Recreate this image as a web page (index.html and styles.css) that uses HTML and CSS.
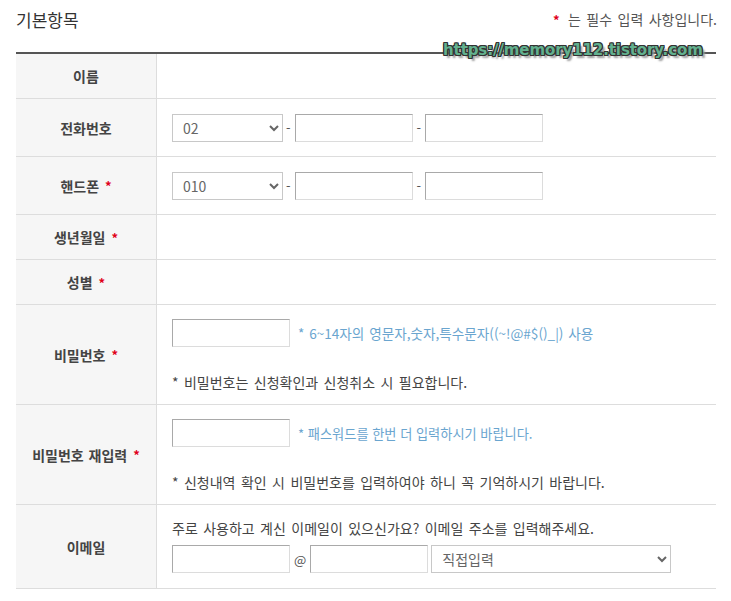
FILE: index.html
```html
<!DOCTYPE html>
<html lang="ko">
<head>
<meta charset="utf-8">
<title>기본항목</title>
<link rel="stylesheet" href="styles.css">
</head>
<body>
<div class="wrap">
  <div class="head">
    <h2 class="title">기본항목</h2>
    <p class="req-note"><span class="star">*</span> 는 필수 입력 사항입니다.</p>
  </div>
  <div class="watermark">https://memory112.tistory.com</div>
  <div class="form">
    <div class="row h44">
      <div class="label">이름</div>
      <div class="cell"></div>
    </div>
    <div class="row h57">
      <div class="label">전화번호</div>
      <div class="cell line">
        <select class="sel-s"><option>02</option></select>
        <span class="dash">-</span>
        <input class="inp" type="text">
        <span class="dash dash2">-</span>
        <input class="inp" type="text">
      </div>
    </div>
    <div class="row h57">
      <div class="label">핸드폰<span class="star lstar">*</span></div>
      <div class="cell line">
        <select class="sel-s"><option>010</option></select>
        <span class="dash">-</span>
        <input class="inp" type="text">
        <span class="dash dash2">-</span>
        <input class="inp" type="text">
      </div>
    </div>
    <div class="row h44">
      <div class="label">생년월일<span class="star lstar">*</span></div>
      <div class="cell"></div>
    </div>
    <div class="row h44">
      <div class="label">성별<span class="star lstar">*</span></div>
      <div class="cell"></div>
    </div>
    <div class="row">
      <div class="label">비밀번호<span class="star lstar">*</span></div>
      <div class="cell stack">
        <div class="line">
          <input class="inp" type="password">
          <span class="hint">* 6~14자의 영문자,숫자,특수문자((~!@#$()_|) 사용</span>
        </div>
        <p class="note">* 비밀번호는 신청확인과 신청취소 시 필요합니다.</p>
      </div>
    </div>
    <div class="row">
      <div class="label">비밀번호 재입력<span class="star lstar">*</span></div>
      <div class="cell stack">
        <div class="line">
          <input class="inp" type="password">
          <span class="hint hint-kr">* 패스워드를 한번 더 입력하시기 바랍니다.</span>
        </div>
        <p class="note">* 신청내역 확인 시 비밀번호를 입력하여야 하니 꼭 기억하시기 바랍니다.</p>
      </div>
    </div>
    <div class="row">
      <div class="label">이메일</div>
      <div class="cell email">
        <p class="email-text">주로 사용하고 계신 이메일이 있으신가요? 이메일 주소를 입력해주세요.</p>
        <div class="line">
          <input class="inp" type="text">
          <span class="at">@</span>
          <input class="inp" type="text">
          <select class="sel-l"><option>직접입력</option></select>
        </div>
      </div>
    </div>
  </div>
</div>
</body>
</html>
```
FILE: styles.css
```css
html, body {
  margin: 0;
  padding: 0;
  background: #fff;
}
body {
  font-family: "Noto Sans CJK KR", "Noto Sans", sans-serif;
  color: #333;
  font-size: 14px;
}
.wrap {
  position: relative;
  width: 700px;
  margin-left: 16px;
}
.head {
  display: flex;
  justify-content: space-between;
  align-items: flex-start;
  height: 52px;
}
.title {
  margin: 9px 0 0;
  font-size: 17px;
  font-weight: 400;
  line-height: 22px;
  color: #333;
}
.req-note {
  margin: 9px -1px 0 0;
  font-size: 14px;
  word-spacing: 1.5px;
  line-height: 20px;
  color: #555;
}
.star {
  color: #e0001b;
  font-weight: 700;
  font-size: 13px;
  margin-right: 3px;
}
.watermark {
  position: absolute;
  left: 427px;
  top: 40px;
  font-family: "DejaVu Sans", sans-serif;
  font-weight: 700;
  font-size: 15px;
  line-height: 20px;
  letter-spacing: -0.1px;
  color: #62b08e;
  text-shadow: 1px 0 0 #333, -1px 0 0 #333, 0 1px 0 #333, 0 -1px 0 #333,
    1px 1px 0 #333, -1px -1px 0 #333, 1px -1px 0 #333, -1px 1px 0 #333,
    3px 3px 2px #9a9a9a;
}
.form {
  border-top: 2px solid #555;
}
.row {
  display: flex;
  border-bottom: 1px solid #ddd;
}
.h44 { height: 44px; }
.h57 { height: 57px; }
.label {
  width: 140px;
  flex: none;
  background: #f6f6f6;
  border-right: 1px solid #ddd;
  display: flex;
  align-items: center;
  justify-content: center;
  font-size: 14px;
  word-spacing: 1px;
  font-weight: 700;
  color: #444;
}
.lstar {
  margin-left: 6px;
  margin-right: 0;
  font-size: 13px;
}
.cell {
  flex: 1;
  padding: 0 15px;
  display: flex;
  align-items: center;
}
.line {
  display: flex;
  align-items: center;
}
.sel-s, .sel-l {
  height: 28px;
  box-sizing: border-box;
  border: 1px solid #c8c8c8;
  background: #fff;
  color: #666;
  font-family: "Noto Sans CJK KR", "Noto Sans", sans-serif;
  font-size: 14px;
  padding: 0 6px;
  margin: 0;
}
.sel-s { width: 111px; }
.sel-l { width: 240px; margin-left: 3px; }
.inp {
  width: 118px;
  height: 28px;
  box-sizing: border-box;
  margin: 0;
  padding: 0 4px;
  border: 1px solid;
  border-color: #a9a9a9 #dcdcdc #dcdcdc #a9a9a9;
  background: #fff;
  font-size: 13px;
}
.dash {
  margin: 0 4px 0 3px;
  color: #555;
  font-size: 13px;
}
.dash2 { margin: 0 4px; }
.at {
  margin: 0 4px;
  color: #555;
  font-size: 13px;
}
.stack {
  flex-direction: column;
  align-items: flex-start;
  padding-top: 14px;
  padding-bottom: 12px;
}
.hint {
  margin-left: 8px;
  color: #6aa5cf;
  font-size: 13.6px;
  word-spacing: 1px;
}
.hint-kr {
  font-size: 13.2px;
  word-spacing: 0;
}
.note {
  margin: 25px 0 0;
  line-height: 20px;
  font-size: 14px;
  word-spacing: 1.5px;
  color: #444;
}
.email {
  flex-direction: column;
  align-items: flex-start;
  padding-top: 13px;
  padding-bottom: 15px;
}
.email-text {
  margin: 0 0 7px;
  line-height: 20px;
  font-size: 14px;
  word-spacing: 1.5px;
  color: #444;
}
```
